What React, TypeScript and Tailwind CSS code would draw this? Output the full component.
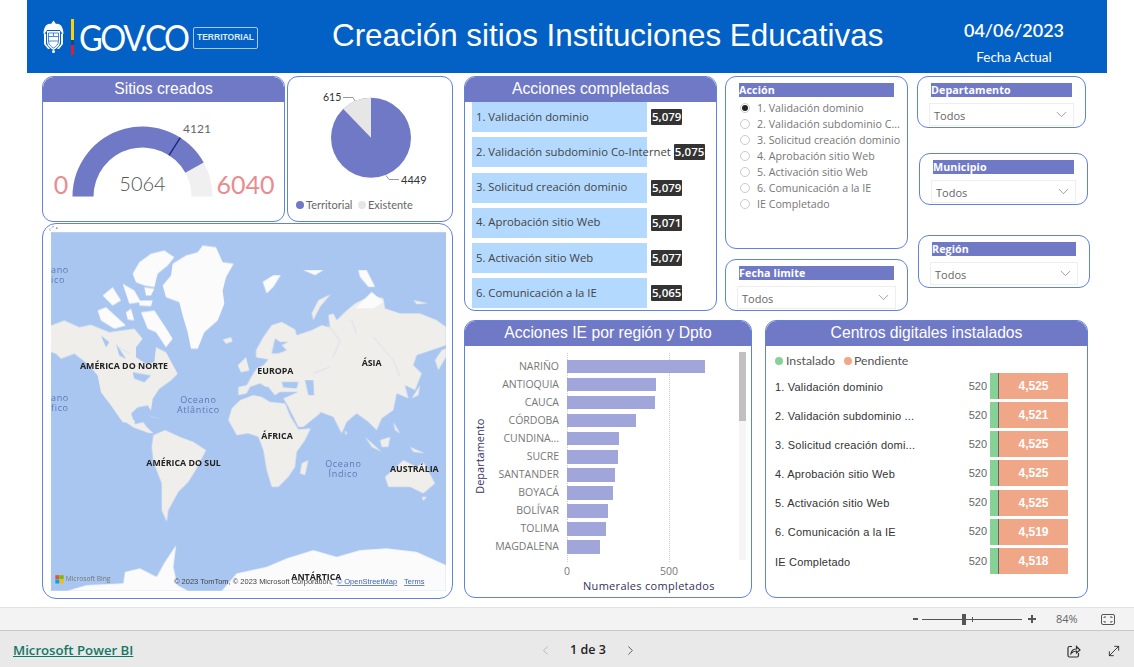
import { ChevronDown, ChevronLeft, ChevronRight, MoveDiagonal } from "lucide-react";

const PURPLE = "#7079c5";
const sans = "font-['Open_Sans',sans-serif]";

const actions = [
  { label: "1. Validación dominio", value: "5,079" },
  { label: "2. Validación subdominio Co-Internet", value: "5,075" },
  { label: "3. Solicitud creación dominio", value: "5,079" },
  { label: "4. Aprobación sitio Web", value: "5,071" },
  { label: "5. Activación sitio Web", value: "5,077" },
  { label: "6. Comunicación a la IE", value: "5,065" },
];

const radios = [
  "1. Validación dominio",
  "2. Validación subdominio C...",
  "3. Solicitud creación dominio",
  "4. Aprobación sitio Web",
  "5. Activación sitio Web",
  "6. Comunicación a la IE",
  "IE Completado",
];

const departments = [
  { name: "NARIÑO", width: 138 },
  { name: "ANTIOQUIA", width: 89 },
  { name: "CAUCA", width: 88 },
  { name: "CÓRDOBA", width: 69 },
  { name: "CUNDINA...", width: 52 },
  { name: "SUCRE", width: 51 },
  { name: "SANTANDER", width: 48 },
  { name: "BOYACÁ", width: 46 },
  { name: "BOLÍVAR", width: 41 },
  { name: "TOLIMA", width: 39 },
  { name: "MAGDALENA", width: 33 },
];

const centers = [
  { label: "1. Validación dominio", value: "4,525" },
  { label: "2. Validación subdominio ...", value: "4,521" },
  { label: "3. Solicitud creación domi...", value: "4,525" },
  { label: "4. Aprobación sitio Web", value: "4,525" },
  { label: "5. Activación sitio Web", value: "4,525" },
  { label: "6. Comunicación a la IE", value: "4,519" },
  { label: "IE Completado", value: "4,518" },
];

function polar(cx: number, cy: number, r: number, ratio: number) {
  const angle = Math.PI * (1 - ratio);
  return [cx + r * Math.cos(angle), cy - r * Math.sin(angle)];
}

function arcPath(cx: number, cy: number, outer: number, inner: number, from: number, to: number) {
  const [x1, y1] = polar(cx, cy, outer, from);
  const [x2, y2] = polar(cx, cy, outer, to);
  const [x3, y3] = polar(cx, cy, inner, to);
  const [x4, y4] = polar(cx, cy, inner, from);
  return `M${x1} ${y1}A${outer} ${outer} 0 0 1 ${x2} ${y2}L${x3} ${y3}A${inner} ${inner} 0 0 0 ${x4} ${y4}Z`;
}

function CardTitle({ children }: { children: string }) {
  return (
    <div className="flex h-[25px] shrink-0 items-center justify-center rounded-t-[11px] bg-[#7079c5] pb-[2px] font-['Liberation_Sans',sans-serif] text-[15.7px] text-white">
      {children}
    </div>
  );
}

function Slicer({ title, className }: { title: string; className: string }) {
  return (
    <div className={`rounded-[11px] border border-[#5f82df] bg-white px-[11px] pt-[6px] ${className}`}>
      <div className={`mx-[2px] h-[14px] bg-[#7079c5] text-[10.7px] leading-[14px] font-bold tracking-[0.1px] text-white ${sans}`}>{title}</div>
      <div className={`mt-[6px] flex h-[23px] items-center justify-between border border-[#eeeeee] pr-[3px] pl-[4px] text-[11px] text-[#666666] ${sans}`}>
        <span className="pt-[3px]">Todos</span>
        <ChevronDown size={17} strokeWidth={0.9} className="text-[#666666]" />
      </div>
    </div>
  );
}

function Gauge() {
  return (
    <svg width="241" height="119" viewBox="0 0 241 119" className="block">
      <path d={arcPath(99.5, 94.5, 70, 49, 0, 1)} fill="#f0f0f0" />
      <path d={arcPath(99.5, 94.5, 70, 49, 0, 5064 / 6040)} fill={PURPLE} />
      <path d="M137.3 35.7L126 53.3" stroke="#1a237e" strokeWidth="1.3" fill="none" />
      <text x="99.5" y="89" textAnchor="middle" fontSize="20" fontWeight="300" fill="#555555" fontFamily="Lato, sans-serif">5064</text>
      <text x="154" y="31" textAnchor="middle" fontSize="12" fill="#666666" fontFamily="Lato, sans-serif">4121</text>
      <text x="18" y="92" textAnchor="middle" fontSize="25" fill="#e98c90" fontFamily="Lato, sans-serif">0</text>
      <text x="202.5" y="92" textAnchor="middle" fontSize="25" fill="#e98c90" fontFamily="Lato, sans-serif">6040</text>
    </svg>
  );
}

function Pie() {
  return (
    <svg width="164" height="144" viewBox="0 0 164 144" className="block">
      <circle cx="83" cy="60.7" r="40" fill={PURPLE} />
      <path d="M83 60.7L83 20.7A40 40 0 0 0 55.3 32Z" fill="#e6e6e6" />
      <path d="M55 20.5L65 20.5L67 24" stroke="#999999" fill="none" />
      <path d="M98 98.5L101 102.5L111 102.5" stroke="#999999" fill="none" />
      <text x="35" y="24" fontSize="10.5" fill="#333333" fontFamily="Lato, sans-serif">615</text>
      <text x="113" y="107" fontSize="11" fill="#333333" fontFamily="Lato, sans-serif">4449</text>
      <circle cx="12" cy="128" r="4" fill={PURPLE} />
      <text x="18" y="132" fontSize="11" fill="#666666" fontFamily="Lato, sans-serif">Territorial</text>
      <circle cx="74" cy="128" r="4" fill="#e6e6e6" />
      <text x="80" y="132" fontSize="11" fill="#666666" fontFamily="Lato, sans-serif">Existente</text>
    </svg>
  );
}

function WorldMap() {
  const sea = "#a9c6f0";
  const land = "#efeeeb";
  const snow = "#fbfbfb";
  const label = { fontFamily: "'Open Sans', sans-serif", fontWeight: 700, fontSize: 26.5, fill: "#222222" };
  const ocean = { fontFamily: "'Open Sans', sans-serif", fontSize: 27, fill: "#5c78b8", letterSpacing: 2 };
  const legal = { fontFamily: "'Liberation Sans', sans-serif", fontSize: 22.5 };
  return (
    <svg width="395" height="359" viewBox="33 36 1185 1076" className="block">
      <rect x="33" y="36" width="1185" height="1076" fill={sea} />
      <g className="blur-[0.6px]">
        {/* America del norte, en coordenadas del recorte */}
        <g transform="translate(33 36)">
          <path d="M335 160L360 130L365 95L405 70L440 60L455 40L495 45L515 90L548 95L525 135L515 175L520 215L500 265L460 300L440 350L420 350L410 300L395 250L385 210L345 195Z" fill={snow} />
          <path d="M245 125L265 90L300 65L340 55L370 75L350 100L320 125L310 165L280 160L255 150Z M155 190L185 165L210 205L185 220Z M215 155L250 175L270 210L235 215Z M265 205L305 205L300 222L265 220Z M140 235L165 225L225 280L190 290L150 265Z M225 240L240 230L250 265L230 262Z M270 240L310 235L340 280L365 320L345 345L315 300L290 290Z M280 165L310 170L300 190L285 190Z" fill={snow} />
          <path d="M0 280L40 265L85 285L120 278L175 300L210 295L250 290L275 320L255 345L255 375L285 395L310 390L315 345L345 360L380 425L360 445L325 470L305 500L300 535L290 520L260 525L240 545L250 570L215 570L180 520L150 480L140 430L110 395L70 365L30 380L15 365L0 360Z" fill={land} />
          <path d="M150 310L175 330L165 345Z M195 335L225 380L205 370Z M245 420L300 430L280 450L250 440Z" fill={sea} />
          <path d="M515 322L540 315L545 328L525 335Z M560 400L585 375L595 415L570 420Z" fill={land} />
        </g>
        <path d="M248 600L283 600L285 612L310 606L318 618L340 640L325 638L280 622Z M320 585L365 598L340 592Z" fill={land} />
        <path d="M340 645L375 630L420 650L460 665L498 690L470 745L445 785L415 815L385 870L380 905L365 870L365 790L340 725L335 680Z" fill={land} />
        <path d="M565 600L575 565L600 540L640 525L665 530L690 545L735 550L752 590L775 628L812 625L795 660L770 695L765 740L745 770L715 800L695 800L680 750L670 690L655 650L625 640L590 645Z M785 730L805 720L795 765L780 760Z" fill={land} />
        {/* Eurasia, en coordenadas del recorte */}
        <g transform="translate(600 150)">
          <path d="M-5 375L-5 350L20 345L35 318L50 295L70 285L85 268L48 262L48 240L70 200L95 165L125 155L165 178L170 195L215 180L245 165L270 172L265 135L280 130L290 150L315 125L345 100L395 75L430 85L435 115L480 130L540 130L590 150L618 170L618 225L590 235L530 255L520 285L545 310L525 360L495 345L505 385L470 370L460 420L425 445L410 480L385 455L350 430L320 455L305 490L280 440L240 425L240 430L190 470L175 470L145 410L130 385L175 365L120 365L105 375L85 355L60 340L30 350L20 370Z" fill={land} />
          <path d="M95 250L105 205L120 215L145 215L125 225L140 240L115 250Z M125 335L175 335L170 355L130 352Z M195 330L220 330L222 375L205 375Z M70 350L85 350L100 370L85 365Z" fill={sea} />
          <path d="M345 115L395 65L430 95L400 115Z M68 35L100 15L122 15L100 50L80 70Z M190 0L250 0L225 15Z M355 0L380 0L405 50L385 50L360 20Z" fill={snow} />
          <path d="M215 130L235 90L272 72L240 110L220 150Z M520 90L565 100L530 102Z M585 270L605 240L618 235L618 260L595 300Z M515 385L540 345L535 375Z M375 500L425 545L395 530Z M420 510L450 500L445 530L425 530Z M510 530L555 550L520 545Z M460 455L480 490L465 480Z M315 480L322 490L316 494Z" fill={land} />
        </g>
        <path d="M1035 770L1090 720L1130 740L1150 725L1185 790L1150 820L1110 800L1045 800Z M1145 830L1160 830L1150 842Z" fill={land} />
        <path d="M80 1112L140 1095L250 1090L255 1055L300 1045L350 1070L372 1030L408 975L400 1040L412 1095L445 1112Z" fill={snow} />
        <path d="M545 1112L590 1060L680 1040L740 1015L820 990L890 1010L960 990L1040 985L1130 995L1218 1035L1218 1112Z" fill={snow} />
        <path d="M860 310L900 360L880 410M1000 350L1060 420L1080 470M935 300L950 340M230 380L270 400M820 460L870 440" stroke="#cfdbee" strokeWidth="2" fill="none" />
      </g>
      <text x="120" y="448" {...label}>AMÉRICA DO NORTE</text>
      <text x="652" y="463" {...label}>EUROPA</text>
      <text x="965" y="438" {...label}>ÁSIA</text>
      <text x="664" y="656" {...label}>ÁFRICA</text>
      <text x="319" y="737" {...label}>AMÉRICA DO SUL</text>
      <text x="1050" y="756" {...label}>AUSTRÁLIA</text>
      <text x="754" y="1081" {...label}>ANTÁRTICA</text>
      <text x="475" y="548" textAnchor="middle" {...ocean}>Oceano</text>
      <text x="475" y="578" textAnchor="middle" {...ocean}>Atlântico</text>
      <text x="910" y="741" textAnchor="middle" {...ocean}>Oceano</text>
      <text x="910" y="770" textAnchor="middle" {...ocean}>Índico</text>
      <text x="33" y="160" {...ocean}>ano</text>
      <text x="33" y="190" {...ocean}>ico</text>
      <text x="33" y="544" {...ocean}>ano</text>
      <text x="33" y="573" {...ocean}>fico</text>
      <rect x="46" y="1065" width="12" height="12" fill="#f25022" />
      <rect x="59" y="1065" width="12" height="12" fill="#7fba00" />
      <rect x="46" y="1078" width="12" height="12" fill="#00a4ef" />
      <rect x="59" y="1078" width="12" height="12" fill="#ffb900" />
      <text x="77" y="1084" fontSize="20" fill="#777777" fontFamily="'Open Sans', sans-serif">Microsoft Bing</text>
      <text x="402" y="1092" fill="#444444" {...legal}>© 2023 TomTom, © 2023 Microsoft Corporation,</text>
      <text x="890" y="1092" fill="#3f63b8" textDecoration="underline" {...legal}>© OpenStreetMap</text>
      <text x="1092" y="1092" fill="#3f63b8" textDecoration="underline" {...legal}>Terms</text>
    </svg>
  );
}

function CoatOfArms() {
  return (
    <svg width="21" height="33" viewBox="0 0 21 33" className="block">
      <path d="M0.5 14C0.5 7 4 3 8 4L10.5 0.5L13 4C17 3 20.5 7 20.5 14L18 12L17 10H4L3 12Z" fill="#ffffff" />
      <path d="M1 13L3 14V24L7 29L5 29L1 24Z M20 13L18 14V24L14 29L16 29L20 24Z" fill="#ffffff" />
      <path d="M4 11H17V21C17 26 14 28 10.5 30C7 28 4 26 4 21Z" fill="#ffffff" />
      <path d="M5.5 13H15.5V21C15.5 24.5 13 26.5 10.5 28C8 26.5 5.5 24.5 5.5 21Z" fill="none" stroke="#1d6cc8" strokeWidth="0.8" />
      <path d="M5.5 16.5H15.5M5.5 21H15.5M10.5 13V16" stroke="#1d6cc8" strokeWidth="0.8" />
      <circle cx="10.5" cy="31.5" r="1.5" fill="#ffffff" />
    </svg>
  );
}

function Header() {
  return (
    <header className="mx-[27px] flex h-[73px] w-[1080px] items-center bg-[#0360c5] text-white">
      <div className="ml-[16px] flex w-[289px] shrink-0 items-center">
        <CoatOfArms />
        <div className="ml-[7px] flex h-[36px] w-[3px] flex-col">
          <div className="h-[21px] bg-[#f5d20f]" />
          <div className="h-[5px] bg-[#0a4a9a]" />
          <div className="h-[10px] bg-[#d6203c]" />
        </div>
        <div className="ml-[5px] w-[109px]">
          <div className="origin-left scale-x-[0.9] font-['Lato',sans-serif] text-[36px] leading-none font-normal tracking-[-2.6px]">GOV.CO</div>
        </div>
        <div className="mt-[2px] ml-[5px] flex h-[22px] w-[65px] items-center justify-center rounded-[2px] border border-[#a8c8ec] font-['Liberation_Sans',sans-serif] text-[8.5px] font-bold text-[#dceafa]">
          TERRITORIAL
        </div>
      </div>
      <h1 className="pb-[2px] font-['Liberation_Sans',sans-serif] text-[31.4px] leading-none font-normal whitespace-nowrap">
        Creación sitios Instituciones Educativas
      </h1>
      <div className="mt-[18px] mr-[38px] ml-auto flex w-[110px] flex-col items-center self-start font-['Lato',sans-serif]">
        <div className="text-[18px] leading-[24px] font-semibold">04/06/2023</div>
        <div className="mt-[6px] text-[13.5px] leading-[18px]">Fecha Actual</div>
      </div>
    </header>
  );
}

function ActionsCard() {
  return (
    <section className="flex h-[235px] w-[253px] flex-col rounded-[11px] border border-[#5f82df] bg-white">
      <CardTitle>Acciones completadas</CardTitle>
      <div className="flex flex-col gap-[5.3px] pl-[7px]">
        {actions.map((a) => (
          <div key={a.label} className="relative h-[30px]">
            <div className="h-full w-[175px] bg-[#b3d9ff]" />
            <div className={`absolute inset-y-0 left-[4px] flex items-center gap-[3px] whitespace-nowrap text-[11.3px] text-[#444444] ${sans}`}>
              <span className={a.value === "5,075" ? "" : "w-[172px]"}>{a.label}</span>
              <span className="rounded-[1px] bg-[#333333] px-[1px] text-[11.5px] leading-[16px] font-semibold text-white">{a.value}</span>
            </div>
          </div>
        ))}
      </div>
    </section>
  );
}

function ActionSlicer() {
  return (
    <div className="h-[173px] rounded-[11px] border border-[#5f82df] bg-white px-[13px] pt-[6px]">
      <div className={`h-[14px] bg-[#7079c5] text-[10.7px] leading-[14px] font-bold tracking-[0.1px] text-white ${sans}`}>Acción</div>
      <div className="mt-[3px] flex flex-col">
        {radios.map((r, i) => (
          <div key={r} className={`flex h-[16px] items-center whitespace-nowrap text-[10.7px] text-[#777777] ${sans}`}>
            <span className="ml-[1px] flex h-[10px] w-[10px] shrink-0 items-center justify-center rounded-full border border-[#cccccc]">
              {i === 0 && <span className="h-[6px] w-[6px] rounded-full bg-[#222222]" />}
            </span>
            <span className="ml-[7px]">{r}</span>
          </div>
        ))}
      </div>
    </div>
  );
}

function RegionChart() {
  return (
    <section className="flex h-[278px] w-[288px] flex-col rounded-[11px] border border-[#5f82df] bg-white">
      <CardTitle>Acciones IE por región y Dpto</CardTitle>
      <div className="relative flex flex-1">
        <div className={`absolute top-[102px] left-[-35px] w-[100px] -rotate-90 text-center text-[11px] text-[#333366] ${sans}`}>Departamento</div>
        <div className="absolute top-[6px] left-[274px] h-[208px] w-[7px] bg-[#f5f5f5]">
          <div className="h-[69px] bg-[#c0c0c0]" />
        </div>
        <div className="absolute top-[7px] bottom-[35px] left-[102px] border-l border-dotted border-[#cccccc]" />
        <div className="absolute top-[7px] bottom-[35px] left-[204px] border-l border-dotted border-[#cccccc]" />
        <div className="mt-[14px] ml-[19px] flex flex-col gap-[4.75px]">
          {departments.map((d) => (
            <div key={d.name} className="flex h-[13.3px] items-center">
              <span className={`w-[75px] text-right text-[10.5px] whitespace-nowrap text-[#777777] ${sans}`}>{d.name}</span>
              <span className="relative ml-[8px] block h-full bg-[#a0a6da]" style={{ width: d.width }} />
            </div>
          ))}
        </div>
        <div className={`absolute top-[218px] left-[99px] text-[10.5px] text-[#777777] ${sans}`}>0</div>
        <div className={`absolute top-[218px] left-[195px] text-[10.5px] text-[#777777] ${sans}`}>500</div>
        <div className={`absolute top-[232px] left-[118px] text-[11px] tracking-[0.3px] whitespace-nowrap text-[#333355] ${sans}`}>Numerales completados</div>
      </div>
    </section>
  );
}

function CentersChart() {
  return (
    <section className="flex h-[278px] w-[323px] flex-col rounded-[11px] border border-[#5f82df] bg-white">
      <CardTitle>Centros digitales instalados</CardTitle>
      <div className="mt-[6px] ml-[9px] flex h-[18px] items-center font-['Lato',sans-serif] text-[12.3px] text-[#555555]">
        <span className="h-[8px] w-[8px] rounded-full bg-[#85d196]" />
        <span className="ml-[3px]">Instalado</span>
        <span className="ml-[9px] h-[8px] w-[8px] rounded-full bg-[#f0a788]" />
        <span className="ml-[2px]">Pendiente</span>
      </div>
      <div className="mt-[3px] flex flex-col gap-[3.15px] pl-[9px]">
        {centers.map((c) => (
          <div key={c.label} className="flex h-[26px] items-center font-['Liberation_Sans',sans-serif]">
            <span className="w-[190px] pt-[2px] text-[11px] tracking-[0.2px] whitespace-nowrap text-[#333333]">{c.label}</span>
            <span className="w-[22px] text-right text-[11px] text-[#666666]">520</span>
            <span className="ml-[3px] h-full w-[8px] bg-[#85d196]" />
            <span className="h-full w-[1px] bg-[#666666]" />
            <span className="flex h-full w-[69px] items-center justify-center bg-[#f0a788] text-[12px] font-bold text-white">{c.value}</span>
          </div>
        ))}
      </div>
    </section>
  );
}

function ZoomBar() {
  return (
    <div className="flex h-[24px] items-center border-t border-b border-t-[#e2e2e2] border-b-[#c8c8c8] bg-[#f3f3f3] text-[#555555]">
      <div className="ml-[913px] flex items-center">
        <span className="h-[2px] w-[5px] bg-[#555555]" />
        <div className="relative ml-[4px] h-[1px] w-[100px] bg-[#555555]">
          <span className="absolute -top-[5px] left-[40px] h-[11px] w-[4px] bg-[#555555]" />
          <span className="absolute -top-[2px] left-[50px] h-[5px] w-[1px] bg-[#555555]" />
        </div>
        <span className="relative ml-[6px] h-[8px] w-[8px]">
          <span className="absolute top-[3px] left-0 h-[2px] w-[8px] bg-[#555555]" />
          <span className="absolute top-0 left-[3px] h-[8px] w-[2px] bg-[#555555]" />
        </span>
        <span className={`ml-[20px] text-[11px] text-[#666666] ${sans}`}>84%</span>
        <svg width="14" height="11" viewBox="0 0 14 11" fill="none" stroke="#555555" className="ml-[23px]">
          <rect x="0.5" y="0.5" width="13" height="10" rx="1.5" />
          <path d="M3 4V3H5M9 3H11V4M3 7V8H5M9 8H11V7" />
        </svg>
      </div>
    </div>
  );
}

export default function App() {
  return (
    <div className="flex h-[667px] w-[1134px] flex-col overflow-hidden bg-white">
      <Header />
      <main className="flex h-[534px] items-start pt-[3px]">
        <div className="ml-[42px] flex w-[411px] flex-col">
          <div className="flex gap-[2px]">
            <section className="h-[146px] w-[243px] overflow-hidden rounded-[11px] border border-[#5f82df]">
              <CardTitle>Sitios creados</CardTitle>
              <Gauge />
            </section>
            <section className="h-[146px] w-[166px] overflow-hidden rounded-[11px] border border-[#5f82df]">
              <Pie />
            </section>
          </div>
          <section className="relative mt-[1px] flex h-[376px] items-start rounded-[14px] border border-[#5f82df] pt-[8px] pl-[8px]">
            <WorldMap />
            <span className="absolute top-[1px] left-[6px] text-[6px] leading-none text-[#888888]">⤢ ▪</span>
          </section>
        </div>
        <div className="ml-[11px] flex w-[626px] flex-col gap-[9px]">
          <div className="flex items-start">
            <ActionsCard />
            <div className="ml-[8px] flex w-[183px] flex-col gap-[10px]">
              <ActionSlicer />
              <Slicer title="Fecha limite" className="h-[52px]" />
            </div>
            <div className="ml-[9px] flex w-[173px] flex-col">
              <Slicer title="Departamento" className="h-[52px] w-[169px]" />
              <Slicer title="Municipio" className="mt-[25px] ml-[2px] h-[52px] w-[169px]" />
              <Slicer title="Región" className="mt-[30px] ml-[1px] h-[53px] w-[172px]" />
            </div>
          </div>
          <div className="flex gap-[13px]">
            <RegionChart />
            <CentersChart />
          </div>
        </div>
      </main>
      <ZoomBar />
      <footer className="relative flex flex-1 items-center justify-center bg-[#e9e9e9] pt-[3px] text-[#222222]">
        <a className={`absolute left-[13px] text-[13.2px] font-semibold text-[#117865] underline ${sans}`}>Microsoft Power BI</a>
        <div className="ml-[42px] flex items-center">
          <ChevronLeft size={15} strokeWidth={1} className="text-[#999999]" />
          <span className={`mx-[17px] text-[12.5px] font-semibold ${sans}`}>1 de 3</span>
          <ChevronRight size={15} strokeWidth={1.2} className="text-[#333333]" />
        </div>
        <svg width="14" height="14" viewBox="0 0 14 14" fill="none" stroke="#333333" strokeWidth="1.2" className="absolute left-[1067px]">
          <path d="M5 2.5H2.5A1.5 1.5 0 0 0 1 4V11.5A1.5 1.5 0 0 0 2.5 13H10A1.5 1.5 0 0 0 11.5 11.5V9" />
          <path d="M4 9.5C4.5 6.5 6.5 5 9.5 5V2.5L13 6L9.5 9V7C7.5 7 5.5 7.8 4 9.5Z" />
        </svg>
        <MoveDiagonal size={16} strokeWidth={1.3} className="absolute left-[1106px] text-[#222222]" />
      </footer>
    </div>
  );
}
